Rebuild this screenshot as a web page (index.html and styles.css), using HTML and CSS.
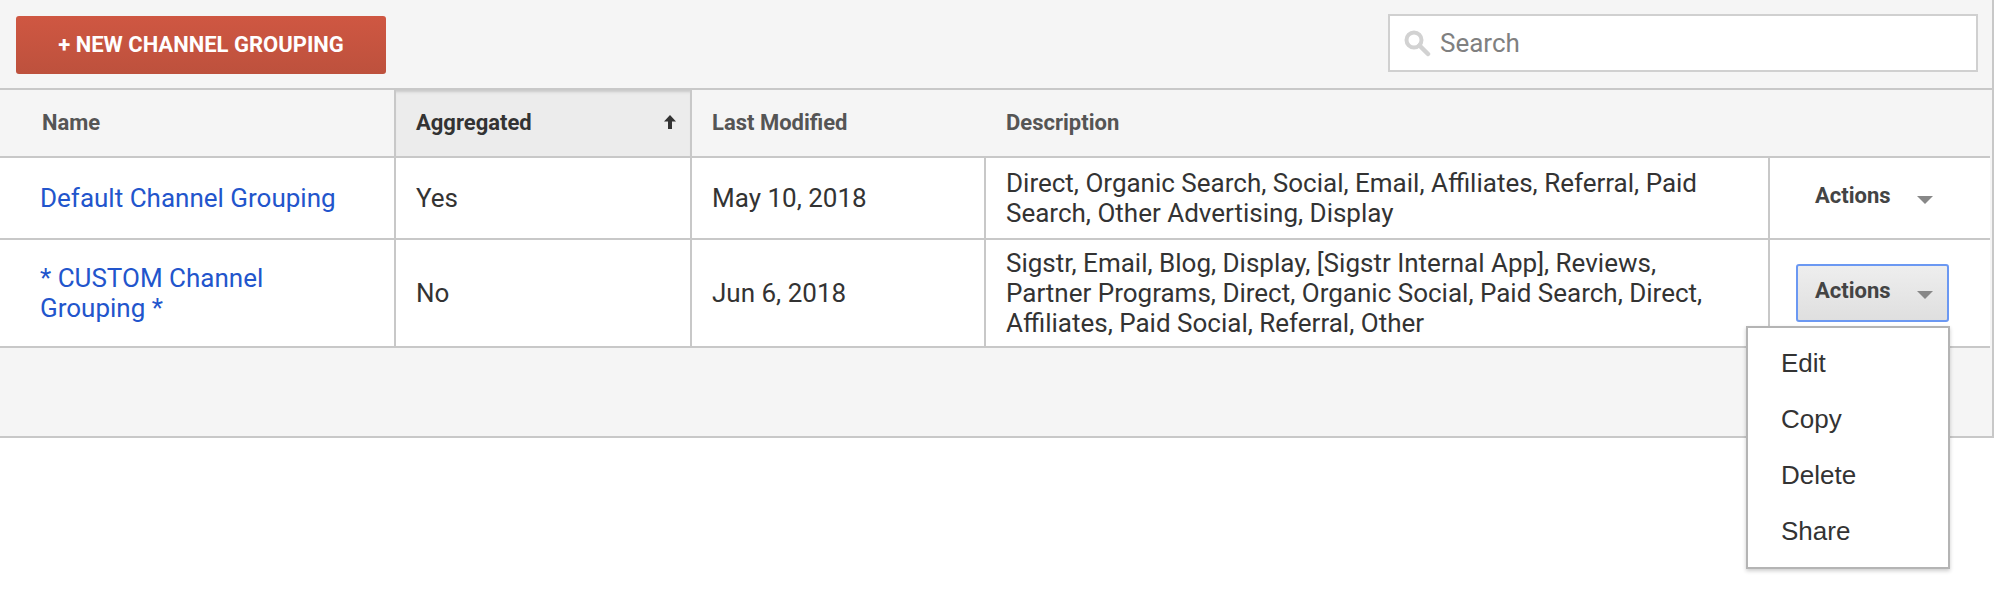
FILE: index.html
```html
<!DOCTYPE html>
<html lang="en">
<head>
  <meta charset="UTF-8" />
  <title>Channel Groupings</title>
  <link rel="stylesheet" href="styles.css">
</head>
<body>

  <div class="panel">
    <div class="toolbar">
      <button class="new-btn">+ NEW CHANNEL GROUPING</button>
      <div class="search">
        <svg class="search-icon" width="28" height="28" viewBox="0 0 28 28">
          <circle cx="11" cy="11" r="7.5" fill="none" stroke="#d2d2d2" stroke-width="4"/>
          <path d="M16.5 16.5 L25 25" stroke="#d2d2d2" stroke-width="4.5" stroke-linecap="round"/>
        </svg>
        <span class="search-text">Search</span>
      </div>
    </div>

    <div class="rows">
      <table>
        <colgroup>
          <col class="col-name">
          <col class="col-agg">
          <col class="col-date">
          <col class="col-desc">
          <col class="col-actions">
        </colgroup>
        <thead>
          <tr>
            <th>Name</th>
            <th class="sorted">
              <div class="sort-head">
                <span>Aggregated</span>
                <svg width="12" height="14" viewBox="0 0 12 14"><path d="M6 0 L12 6.5 H8 V14 H4 V6.5 H0 Z" fill="#333"/></svg>
              </div>
            </th>
            <th class="no-line">Last Modified</th>
            <th class="no-line head-desc" colspan="2">Description</th>
          </tr>
        </thead>
        <tbody>
          <tr class="row-short">
            <td><a href="#">Default Channel Grouping</a></td>
            <td>Yes</td>
            <td>May 10, 2018</td>
            <td class="desc">Direct, Organic Search, Social, Email, Affiliates, Referral, Paid Search, Other Advertising, Display</td>
            <td class="actions-cell">
              <div class="actions">Actions <span class="caret"></span></div>
            </td>
          </tr>
          <tr class="row-tall">
            <td><a href="#">* CUSTOM Channel Grouping *</a></td>
            <td>No</td>
            <td>Jun 6, 2018</td>
            <td class="desc">Sigstr, Email, Blog, Display, [Sigstr Internal App], Reviews, Partner Programs, Direct, Organic Social, Paid Search, Direct, Affiliates, Paid Social, Referral, Other</td>
            <td class="actions-cell">
              <div class="actions open">Actions <span class="caret"></span></div>
            </td>
          </tr>
        </tbody>
      </table>
    </div>
    <div class="panel-foot"></div>
  </div>

  <ul class="menu">
    <li>Edit</li>
    <li>Copy</li>
    <li>Delete</li>
    <li>Share</li>
  </ul>

</body>
</html>
```

FILE: styles.css
```css
body {
  margin: 0;
  background: #fff;
  color: #333;
  font-family: Roboto, sans-serif;
}
.panel {
  background: #f5f5f5;
  border-right: 2px solid #c8c8c8;
  border-bottom: 2px solid #c8c8c8;
}
.toolbar {
  height: 88px;
  padding: 0 14px 0 16px;
  display: flex;
  justify-content: space-between;
  align-items: flex-start;
  border-bottom: 2px solid #c8c8c8;
}
.new-btn {
  width: 370px;
  height: 58px;
  margin-top: 16px;
  padding: 0 0 2px;
  border: none;
  border-radius: 3px;
  background: linear-gradient(#cf5742, #bd513d);
  color: #fff;
  font-family: Roboto, sans-serif;
  font-size: 22px;
  font-weight: 700;
}
.search {
  width: 586px;
  height: 54px;
  margin-top: 14px;
  background: #fff;
  border: 2px solid #d0d0d0;
  display: flex;
  align-items: center;
}
.search-icon {
  margin-left: 13px;
  margin-right: 9px;
}
.search-text {
  font-size: 26px;
  color: #808080;
}
table {
  width: 1990px;
  border-collapse: collapse;
  table-layout: fixed;
}
.col-name { width: 395px; }
.col-agg { width: 296px; }
.col-date { width: 294px; }
.col-desc { width: 784px; }
.col-actions { width: 221px; }
th {
  height: 64px;
  padding: 0 20px 2px;
  text-align: left;
  font-size: 22px;
  font-weight: 700;
  color: #555;
  border-right: 2px solid #c8c8c8;
  border-bottom: 2px solid #c8c8c8;
}
th:first-child {
  padding-left: 42px;
}
th.no-line {
  border-right: none;
}
th.head-desc {
  padding-left: 21px;
}
th.sorted {
  background: #ececec;
  color: #333;
  padding-right: 14px;
  box-shadow: inset 0 4px 3px -2px #c8c8c8;
}
.sort-head {
  display: flex;
  justify-content: space-between;
  align-items: center;
}
td {
  padding: 0 20px;
  font-size: 26px;
  line-height: 30px;
  color: #333;
  background: #fff;
  border-right: 2px solid #c8c8c8;
  border-bottom: 2px solid #c8c8c8;
}
td:first-child {
  padding-left: 40px;
  padding-right: 40px;
}
td.desc {
  padding-right: 50px;
}
td:last-child {
  border-right: none;
}
.row-short td { height: 80px; }
.row-tall td { height: 106px; }
td a {
  color: #2255cc;
  text-decoration: none;
}
td.actions-cell {
  padding: 0 0 0 26px;
}
.actions {
  width: 153px;
  height: 58px;
  box-sizing: border-box;
  display: flex;
  align-items: center;
  justify-content: space-between;
  padding: 0 14px 4px 17px;
  font-size: 22px;
  font-weight: 700;
  color: #444;
  border: 2px solid transparent;
  border-radius: 3px;
}
.actions.open {
  background: linear-gradient(#eeeeee, #dfdfdf);
  border-color: #6b98f2;
}
.caret {
  width: 0;
  height: 0;
  border-left: 8px solid transparent;
  border-right: 8px solid transparent;
  border-top: 8px solid #888;
  margin-top: 8px;
}
.panel-foot {
  height: 88px;
}
.menu {
  position: absolute;
  left: 1746px;
  top: 326px;
  width: 200px;
  height: 239px;
  margin: 0;
  padding: 0;
  list-style: none;
  background: #fff;
  border: 2px solid #b4b4b4;
  box-shadow: 0 2px 4px rgba(0,0,0,0.2);
  font-family: "Liberation Sans", Arial, sans-serif;
  font-size: 26px;
  color: #333;
}
.menu li {
  height: 56px;
  line-height: 56px;
  padding-left: 33px;
}
.menu li:first-child {
  margin-top: 7px;
}
```
